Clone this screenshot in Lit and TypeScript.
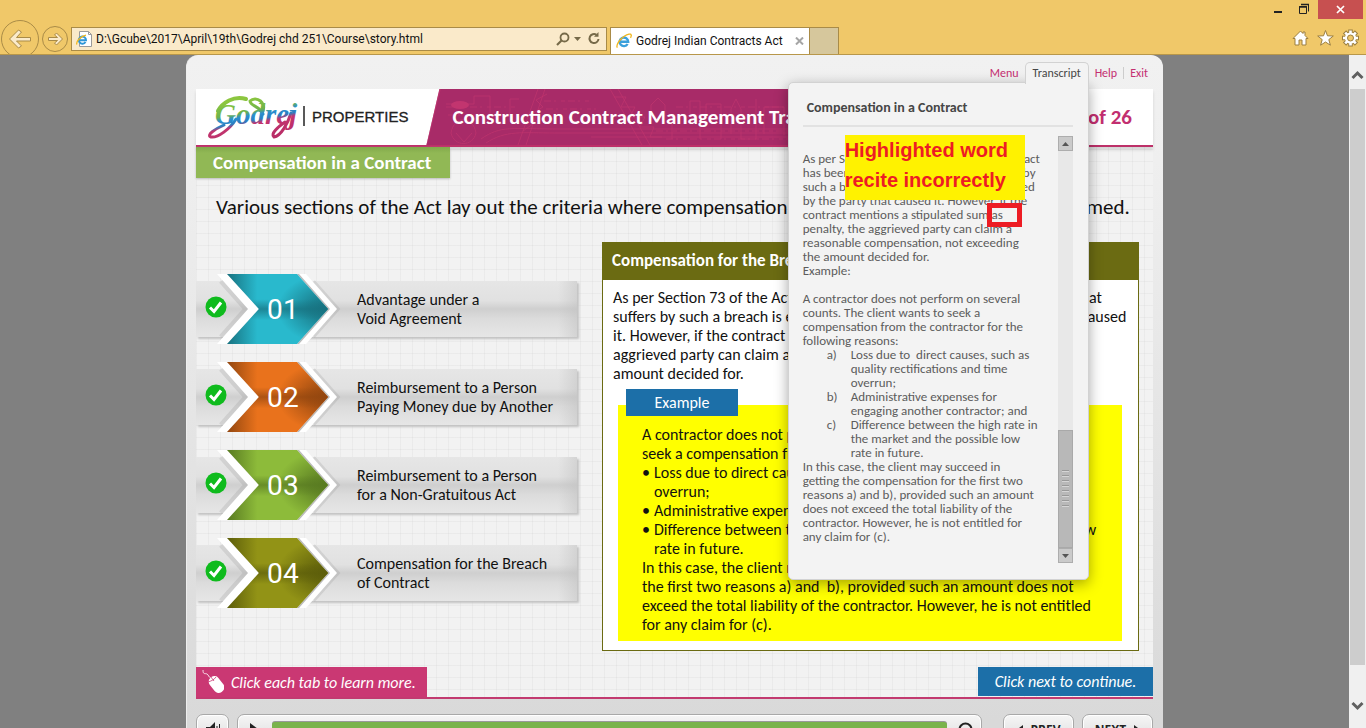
import { LitElement, html, css, svg } from "lit";
import { customElement } from "lit/decorators.js";

const topics = [
  { no: "01", lines: ["Advantage under a", "Void Agreement"], main: "#29b9cd", dark: "#17717f" },
  { no: "02", lines: ["Reimbursement to a Person", "Paying Money due by Another"], main: "#e9721c", dark: "#92460f" },
  { no: "03", lines: ["Reimbursement to a Person", "for a Non-Gratuitous Act"], main: "#8dbb3a", dark: "#587a21" },
  { no: "04", lines: ["Compensation for the Breach", "of Contract"], main: "#929316", dark: "#5c5d0a" },
];

const ieLogo = html`<svg class="ie" viewBox="0 0 16 16" aria-hidden="true">
  <path d="M3.6 8.7h8.6A4.3 4.3 0 1 0 11.6 11" fill="none" stroke="#3aa0dc" stroke-width="2.4" />
  <path d="M1.4 14.6C-.4 12.6 3.4 6.400 8.200 3.200C11.600 1 15 .2 15.200 2.200C15.300 3 15 4 14.500 4.800" fill="none" stroke="#f0b61c" stroke-width="1.300" />
</svg>`;

@customElement("browser-bar")
class BrowserBar extends LitElement {
  static styles = css`
    :host { display: block; flex: none; height: 54px; overflow: hidden; background: #f0c869; border-bottom: 1px solid #b8974a; font-family: Roboto, "Open Sans", sans-serif; font-size: 12px; color: #111; }
    button { border: 0; background: none; padding: 0; display: grid; place-items: center; }
    svg { display: block; }
    .window { display: flex; justify-content: flex-end; height: 20px; padding-right: 3px; gap: 8px; }
    .window button { width: 16px; height: 19px; }
    .window .close { width: 45px; background: #c75050; }
    .bar { display: flex; align-items: flex-start; gap: 3px; padding-left: 1px; }
    .nav { display: flex; gap: 3px; }
    .address { box-sizing: border-box; flex: 0 1 536px; display: flex; align-items: center; height: 24px; margin-top: 7px; padding: 0 4px; gap: 4px; border: 1px solid #a98b47; background: #faeaca; }
    input { flex: 1; min-width: 0; border: 0; padding: 0; background: none; font: inherit; color: inherit; outline: 0; }
    .ie { width: 16px; height: 16px; flex: none; }
    .tabs { display: flex; align-items: stretch; height: 27px; margin-top: 7px; }
    .tab { box-sizing: border-box; width: 200px; display: flex; align-items: center; gap: 4px; padding: 0 5px; background: #fff; border: 1px solid #a98b47; border-bottom: 0; }
    .tab span { flex: 1; white-space: nowrap; }
    .new { width: 29px; background: #d6c79c; border: 1px solid #a98b47; border-left: 0; border-bottom: 0; }
    .tools { display: flex; gap: 8px; margin: 9px 7px 0 auto; }
  `;
  render() {
    return html`
      <div class="window">
        <button aria-label="Minimize"><svg width="16" height="19"><path d="M4 12h8" stroke="#222" stroke-width="2" /></svg></button>
        <button aria-label="Restore"><svg width="16" height="19" fill="none" stroke="#222"><path d="M5.500 6.500h7v7h-7zM7.500 4.500h7v7" /><path d="M5 7h8M7 4.500h8" stroke-width="1.500" /></svg></button>
        <button class="close" aria-label="Close"><svg width="9" height="9"><path d="M1 1l7 7M8 1l-7 7" stroke="#fff" stroke-width="1.700" /></svg></button>
      </div>
      <div class="bar">
        <div class="nav">
          <button aria-label="Back"><svg width="38" height="38" fill="none" stroke="#a98b47"><circle cx="19" cy="19" r="18.500" /><path d="M8.500 19l9-9 3 2-5 5.500h14v3.500h-14l5 5-3 2z" fill="#faeaca" stroke-linejoin="round" /></svg></button>
          <button aria-label="Forward"><svg width="26" height="38" fill="none" stroke="#a98b47"><circle cx="13" cy="19" r="12.500" /><path d="M20.500 19l-6-6-2 2 3 2.500h-9v3h9l-3 2.500 2 2z" fill="#faeaca" stroke-linejoin="round" /></svg></button>
        </div>
        <div class="address">
          <svg class="ie" viewBox="0 0 16 16" aria-hidden="true"><path d="M3.500.5h9l3 3v12h-12z" fill="#fff" stroke="#9a9a9a" /><path d="M12.500.5v3h3" fill="none" stroke="#9a9a9a" /><path d="M3.500 9.300h6.500A3.600 3.600 0 1 0 9.500 11" fill="none" stroke="#2f97d8" stroke-width="2" /><path d="M.8 13.500C0 10.500 4 5.500 10 4.200" fill="none" stroke="#f0b61c" stroke-width="1.300" /></svg>
          <input aria-label="Address" value="D:\\Gcube\\2017\\April\\19th\\Godrej chd 251\\Course\\story.html" />
          <button aria-label="Search"><svg width="14" height="14" fill="none" stroke="#766a49" stroke-width="1.800"><circle cx="8.500" cy="5.500" r="4" /><path d="M5.500 8.500L1 13" stroke-width="2.200" /></svg></button>
          <button aria-label="Show address list"><svg width="8" height="5"><path d="M0 0h7L3.500 4z" fill="#766a49" /></svg></button>
          <button aria-label="Refresh"><svg width="16" height="16" fill="none"><path d="M10.500 3.800a4.500 4.500 0 1 0 2 4.200" stroke="#766a49" stroke-width="2" /><path d="M8 5.800h4.500V1z" fill="#766a49" /></svg></button>
        </div>
        <div class="tabs">
          <div class="tab">${ieLogo}<span>Godrej Indian Contracts Act</span>
            <button aria-label="Close tab"><svg width="9" height="8"><path d="M1 .5l7 7M8 .5l-7 7" stroke="#a5a5a5" stroke-width="2" /></svg></button></div>
          <button class="new" aria-label="New tab"></button>
        </div>
        <div class="tools">
          <button aria-label="Home"><svg width="17" height="18" viewBox="0 0 17 18"><path d="M8.500 2L1 9.500h2V16h4v-5h3v5h4V9.500h2l-3-3V3h-2v1.500z" fill="#fff" stroke="#9b7f40" /></svg></button>
          <button aria-label="Favorites"><svg width="17" height="18" viewBox="0 0 17 18"><path d="M8.500 1.500l2 5.300 5.800.2-4.500 3.600 1.600 5.600-4.900-3.200-4.900 3.200 1.600-5.600L.7 7l5.800-.2z" fill="#fff" stroke="#9b7f40" /></svg></button>
          <button aria-label="Tools"><svg width="17" height="18" viewBox="0 0 17 18"><g transform="translate(8.500 9)"><g fill="#fff" stroke="#9b7f40">${[0, 45, 90, 135].map((a) => svg`<rect x="-1.800" y="-8" width="3.600" height="16" transform="rotate(${a})" />`)}</g><circle r="5.600" fill="#fff" /><circle r="3" fill="#f0c869" stroke="#9b7f40" /></g></svg></button>
        </div>
      </div>`;
  }
}

@customElement("page-scrollbar")
class PageScrollbar extends LitElement {
  static styles = css`
    :host { flex: none; width: 17px; display: flex; flex-direction: column; align-items: center; background: #f0f0f0; }
    button { border: 0; padding: 0; background: none; height: 34px; display: grid; place-items: center; }
    .down { height: 16px; margin: auto 0 14px; }
    .thumb { width: 15px; height: 576px; background: #cdcdcd; }
  `;
  render() {
    return html`
      <button aria-label="Scroll up"><svg width="13" height="15"><path d="M1.500 13l5-5 5 5" fill="none" stroke="#606060" stroke-width="3" /></svg></button>
      <div class="thumb"></div>
      <button class="down" aria-label="Scroll down"><svg width="13" height="10"><path d="M1.500 2l5 5 5-5" fill="none" stroke="#606060" stroke-width="3" /></svg></button>`;
  }
}

@customElement("transcript-panel")
class TranscriptPanel extends LitElement {
  static styles = css`
    :host { position: absolute; z-index: 5; right: 0; top: 20px; box-sizing: border-box; width: 301px; height: 498px; padding: 0 15px 16px 14px; border: 1px solid #d2d2d2; border-radius: 5px 0 5px 5px; background: #f3f3f3; box-shadow: 0 4px 14px rgba(0, 0, 0, .35); color: #5c5c5c; }
    h2 { margin: 0 0 9px; padding: 16px 4px 0; height: 26px; line-height: 18px; border-bottom: 2px solid #e2e2e2; font-size: 14px; color: #464646; }
    .scroll { display: flex; justify-content: space-between; height: 427px; }
    .text { padding-top: 16px; font-size: 13px; line-height: 14px; white-space: nowrap; }
    p { margin: 0; }
    .gap { margin-top: 14px; }
    ol { margin: 0; padding: 0; list-style: none; }
    li { display: grid; grid-template-columns: 24px auto; padding-left: 24px; }
    .bar { flex: none; box-sizing: border-box; width: 15px; display: flex; flex-direction: column; background: #e8e8e8; }
    .bar button { box-sizing: border-box; height: 15px; border: 1px solid #adadad; padding: 0; background: #cacaca; display: grid; place-items: center; }
    .thumb { box-sizing: border-box; margin-top: auto; height: 118px; border: 1px solid #a9a9a9; background: #b8b8b8; display: grid; place-items: center; }
    .grip { width: 7px; height: 38px; background: repeating-linear-gradient(#999 0 1px, #d5d5d5 1px 2px, transparent 2px 5px); }
    .note { position: absolute; left: 56px; top: 52px; width: 180px; height: 65px; background: #fff200; color: #ed1c24; font: bold 20px/30px "Liberation Sans", sans-serif; white-space: nowrap; }
    .mark { position: absolute; left: 198px; top: 120px; box-sizing: border-box; width: 35px; height: 24px; border: 5px solid #ed1c24; }
  `;
  render() {
    return html`
      <h2>Compensation in a Contract</h2>
      <div class="scroll">
        <div class="text">
          <p>As per Section 73 of the Act, when a contract<br />has been breached, the party that suffers by<br />such a breach is entitled to be compensated<br />by the party that caused it. However, if the<br />contract mentions a stipulated sum as<br />penalty, the aggrieved party can claim a<br />reasonable compensation, not exceeding<br />the amount decided for.</p>
          <p>Example:</p>
          <p class="gap">A contractor does not perform on several<br />counts. The client wants to seek a<br />compensation from the contractor for the<br />following reasons:</p>
          <ol>
            <li><span>a)</span><span>Loss due to&nbsp; direct causes, such as<br />quality rectifications and time<br />overrun;</span></li>
            <li><span>b)</span><span>Administrative expenses for<br />engaging another contractor; and</span></li>
            <li><span>c)</span><span>Difference between the high rate in<br />the market and the possible low<br />rate in future.</span></li>
          </ol>
          <p>In this case, the client may succeed in<br />getting the compensation for the first two<br />reasons a) and b), provided such an amount<br />does not exceed the total liability of the<br />contractor. However, he is not entitled for<br />any claim for (c).</p>
        </div>
        <div class="bar">
          <button aria-label="Scroll transcript up"><svg width="7" height="4"><path d="M0 4h7L3.500 0z" fill="#555" /></svg></button>
          <div class="thumb"><div class="grip"></div></div>
          <button aria-label="Scroll transcript down"><svg width="7" height="4"><path d="M0 0h7L3.500 4z" fill="#555" /></svg></button>
        </div>
      </div>
      <div class="note">Highlighted word<br />recite incorrectly</div>
      <div class="mark"></div>`;
  }
}

@customElement("topic-tab")
class TopicTab extends LitElement {
  static properties = { topic: { attribute: false } };
  declare topic: (typeof topics)[number];
  static styles = css`
    :host { display: block; }
    button { position: relative; width: 100%; height: 70px; padding: 0 0 0 9px; border: 0; background: none; display: grid; grid-template-columns: 22px 110px 1fr; align-items: center; font: inherit; color: #111; text-align: left; }
    .strip { position: absolute; inset: 7px 0; background: linear-gradient(90deg, transparent 95%, rgba(190, 190, 190, .45)), linear-gradient(#e6e6e6, #e1e1e1 35%, #cfcfcf 50%, #dcdcdc 68%, #e6e6e6); box-shadow: 2px 2px 2px #c2c2c2; }
    .check, .arrow, .label { position: relative; }
    .check { margin-top: -4px; }
    .arrow { margin-left: -10px; overflow: visible; }
    .label { padding-left: 20px; line-height: 19px; white-space: nowrap; }
    text { font: 28px Roboto, "Liberation Sans", sans-serif; }
  `;
  render() {
    const t = this.topic;
    return html`<button>
      <span class="strip"></span>
      <svg class="check" width="22" height="22"><circle cx="11" cy="11" r="10.500" fill="#0fbb1d" /><path d="M5 11.500l4 4 7-9" fill="none" stroke="#fff" stroke-width="3" /></svg>
      <svg class="arrow" width="122" height="70">
        <defs>
          <linearGradient id="a"><stop offset="0" stop-color="${t.dark}" /><stop offset=".3" stop-color="${t.main}" /><stop offset="1" stop-color="${t.main}" /></linearGradient>
          <radialGradient id="b" cx="1" cy=".5" r=".5"><stop offset="0" stop-color="${t.dark}" /><stop offset=".35" stop-color="${t.dark}" stop-opacity=".75" /><stop offset="1" stop-color="${t.dark}" stop-opacity="0" /></radialGradient>
          <linearGradient id="c" x2="0" y2="1"><stop offset=".36" stop-color="${t.dark}" stop-opacity="0" /><stop offset=".5" stop-color="${t.dark}" stop-opacity=".7" /><stop offset=".66" stop-color="${t.dark}" stop-opacity="0" /></linearGradient>
        </defs>
        <path d="M4 7L29 35L4 63M96 8L120 35L96 62" fill="none" stroke="#888" stroke-opacity=".2" stroke-width="5" />
        <path d="M0 0H10L42 35L10 70H0L31 35z" fill="#fff" />
        <path d="M80 0H89L120 35L89 70H80L111 35z" fill="#fff" />
        <path d="M80 0l31 35-31 35h2l31-35L82 0z" fill="#bbb" />
        <path d="M10 0H80L111 35L80 70H10L42 35z" fill="url(#a)" />
        <path d="M10 0H80L111 35L80 70H10L42 35z" fill="url(#b)" />
        <path d="M10 0H80L111 35L80 70H10L42 35z" fill="url(#c)" />
        <text x="50" y="45" fill="#fff">${t.no[0]}</text><text x="66" y="45" fill="#fff">${t.no[1]}</text>
      </svg>
      <span class="label">${t.lines[0]}<br />${t.lines[1]}</span>
    </button>`;
  }
}

@customElement("app-root")
class AppRoot extends LitElement {
  static styles = css`
    :host { display: flex; flex-direction: column; height: 100vh; overflow: hidden; background: #808080; font-family: Calibri, Carlito, Lato, sans-serif; font-size: 16px; color: #111; }
    a { color: inherit; text-decoration: none; }
    h1, h2, p, ul { margin: 0; padding: 0; }
    svg { display: block; }
    .view { flex: 1; min-height: 0; display: flex; overflow: hidden; }
    .center { flex: 1; min-width: 0; display: flex; justify-content: center; align-items: flex-start; }
    .player { box-sizing: border-box; flex: 0 1 977px; min-width: 0; padding: 0 10px 12px 9px; border-radius: 12px 12px 0 0; background: linear-gradient(#f1f1f1, #efefef 15%, #d9d9d9 95%); border-left: 1px solid #eee; }
    .menu { position: relative; display: flex; justify-content: flex-end; height: 34px; box-sizing: border-box; padding: 7px 5px 0 0; font-size: 12px; line-height: 22px; color: #c42f70; }
    .menu .tab { position: relative; box-sizing: border-box; width: 64px; height: 22px; border: 1px solid #d2d2d2; border-bottom: 0; border-radius: 5px 5px 0 0; background: #f3f3f3; color: #464646; text-align: center; line-height: 20px; z-index: 6; }
    .pop { position: relative; margin: 0 6px; }
    .help { padding-right: 6px; }
    .exit { padding-left: 7px; background: linear-gradient(#ccc, #ccc) 0 5px / 1px 12px no-repeat; }
    .stage { background: repeating-linear-gradient(90deg, rgba(0, 0, 0, .03) 0 1px, transparent 1px 12px), repeating-linear-gradient(rgba(0, 0, 0, .03) 0 1px, transparent 1px 12px), #f2f2f2; border-bottom: 2px solid #c23a70; }
    .head { box-sizing: border-box; display: flex; align-items: center; height: 58px; background: #fff; border-bottom: 2px solid #bd3069; box-shadow: 0 3px 3px rgba(0, 0, 0, .12); }
    .logo { flex: none; }
    .brand { flex: none; font: 15px/20px "Liberation Sans", sans-serif; color: #222; -webkit-text-stroke: 0.3px #222; }
    .banner { position: relative; flex: 1; align-self: stretch; margin-left: 18px; background: #a82b68; clip-path: polygon(13px 0, 100% 0, 100% 100%, 0 100%); display: flex; align-items: center; }
    .banner svg { position: absolute; inset: 0; width: 100%; height: 100%; }
    h1 { position: relative; padding-left: 26px; font-size: 21px; line-height: 24px; color: #fff; white-space: nowrap; }
    .page { flex: none; width: 120px; padding-right: 21px; text-align: right; font-weight: bold; font-size: 21px; color: #c22f70; }
    .topic { width: 237px; padding-left: 17px; background: linear-gradient(#82a94b, #91b855 6px); box-shadow: 0 1px 2px #bbb; color: #fff; font-size: 19px; line-height: 31px; }
    .intro { padding: 15px 0 0 20px; font-size: 21px; line-height: 28px; white-space: nowrap; }
    .body { display: flex; justify-content: space-between; padding: 21px 14px 16px 0; }
    .topics { flex: 0 0 381px; display: flex; flex-direction: column; gap: 18px; padding-top: 32px; }
    .panel { box-sizing: border-box; flex: 0 1 537px; border: 1px solid #6b6b12; border-top: 0; background: #fff; line-height: 19px; white-space: nowrap; }
    .panel h2 { padding-left: 9px; background: #6b6b12; color: #fff; font-size: 17px; line-height: 38px; }
    .law { padding: 8px 10px 6px; }
    .case { margin: 0 16px 9px 15px; padding: 0 24px 7px; background: linear-gradient(#fff 16px, #ff0 16px); }
    .case h3 { margin: 0 0 9px -16px; width: 112px; background: #1c6fa8; color: #fff; font-size: 16px; font-weight: normal; line-height: 27px; text-align: center; }
    li { list-style: none; display: grid; grid-template-columns: 12px auto; }
    .foot { display: flex; justify-content: space-between; height: 30px; font-size: 16px; font-style: italic; line-height: 29px; color: #fff; white-space: nowrap; }
    .hint { display: flex; align-items: center; gap: 7px; width: 225px; padding-left: 6px; background: #ca3873; }
    .next { box-sizing: border-box; width: 175px; height: 29px; background: #1c6fa8; text-align: center; }
    .controls { display: flex; gap: 8px; padding-top: 15px; }
    .controls button, .seek { box-sizing: border-box; height: 30px; border: 1px solid #a9a9a9; border-radius: 7px; background: linear-gradient(#f6f6f6, #dcdcdc); box-shadow: inset 0 0 0 1px #fff; }
    .controls button { padding: 0; display: flex; align-items: center; justify-content: center; gap: 8px; font: bold 12px "Open Sans", sans-serif; color: #222; }
    .controls .vol { width: 33px; }
    .seek { flex: 1; display: flex; align-items: center; gap: 10px; padding: 0 8px 0 12px; margin-right: 13px; }
    .seek .play, .seek .again { border: 0; background: none; box-shadow: none; height: 20px; }
    .track { flex: 1; height: 14px; margin: 0 1px 0 4px; border-radius: 3px; background: #7ab34b; box-shadow: 0 -1px #999; }
    .controls .step { width: 71px; }
  `;
  render() {
    return html`
      <browser-bar></browser-bar>
      <div class="view">
        <div class="center">
          <main class="player">
            <nav class="menu">
              <a href="#">Menu</a>
              <div class="pop"><a href="#"><div class="tab">Transcript</div></a><transcript-panel></transcript-panel></div>
              <a class="help" href="#">Help</a>
              <a class="exit" href="#">Exit</a>
            </nav>
            <section class="stage">
              <header class="head">
                <svg class="logo" width="116" height="56" aria-label="Godrej">
                  <defs><linearGradient id="g" gradientUnits="userSpaceOnUse" x1="60" y1="8" x2="68" y2="50"><stop offset="0" stop-color="#8cc63f" /><stop offset=".3" stop-color="#6db24c" /><stop offset=".4" stop-color="#2b8fcf" /><stop offset=".52" stop-color="#2b7ec0" /><stop offset=".6" stop-color="#c2356f" /><stop offset="1" stop-color="#b82c66" /></linearGradient></defs>
                  <g fill="none" stroke="url(#g)" stroke-linecap="round">
                    <path d="M50 10C38 6 26 14 22 22" stroke-width="4" />
                    <path d="M40 30C34 40 22 49 15 48C10 46 19 40 28 36" stroke-width="3" />
                    <path d="M66 24C72 14 60 6 54 12C54 17 64 17 67 25" stroke-width="3" />
                    <path d="M95 24C92 34 85 47 78 48C74 45 82 38 89 33" stroke-width="3" />
                  </g>
                  <text x="19" y="35" font-family="Liberation Serif, serif" font-size="29" font-weight="bold" font-style="italic" fill="url(#g)">Godrej</text>
                  <path d="M108 17v20" stroke="#222" stroke-width="1.500" />
                </svg>
                <span class="brand">PROPERTIES</span>
                <div class="banner">
                  <svg aria-hidden="true"><g fill="none" stroke="#c2356f" stroke-opacity=".65">
                    <path d="M0 56l14-57" stroke-width="2" />
                    <path d="M92 56L112 0m-12 56l19-56M97 42l14-10-7-6 13-8-7-7 11-6M184 0l32 56m-24-56l32 56M188 8h12l-5 10h14l-5 10h15l-5 10h14l-4 10h12" />
                    <path d="M55 50c20-14 30-10 80-10h290M60 54c20-13 35-10 70-10h300M165 48h260M25 44c3-18 22-18 25 0-3 14-22 14-25 0zM30 44l8 9 8-9" />
                    <path d="M20 15h28v-8h16v20h20v-17h9M225 35V16l7-7 7 7v19M246 50V28h18V12h10v38M280 35V15h15v35M305 45V20l5-10 5 10v30h15V10m8 35V18h20v28" />
                    <path d="M20 18h70M22 26h60M118 12h48M120 20h50M250 18h170M246 26h180M230 42h210M240 50h200" stroke-dasharray="7 3 2 5 4 3" />
                  </g><ellipse cx="34" cy="16" rx="9" ry="4" fill="#c2356f" /></svg>
                  <h1>Construction Contract Management Training</h1>
                </div>
                <div class="page">Page 20 of 26</div>
              </header>
              <h2 class="topic">Compensation in a Contract</h2>
              <p class="intro">Various sections of the Act lay out the criteria where compensation for a breach of contract can be claimed.</p>
              <div class="body">
                <div class="topics">${topics.map((t) => html`<topic-tab .topic=${t}></topic-tab>`)}</div>
                <article class="panel">
                  <h2>Compensation for the Breach of Contract</h2>
                  <p class="law">As per Section 73 of the Act, if a contract has been breached, the party that<br />suffers by such a breach is entitled to be compensated by the party that caused<br />it. However, if the contract mentions a stipulated sum as penalty, the<br />aggrieved party can claim a reasonable compensation, not exceeding the<br />amount decided for.</p>
                  <div class="case">
                    <h3>Example</h3>
                    <p>A contractor does not perform on several counts. The client wants to<br />seek a compensation from the contractor for the following reasons:</p>
                    <ul>
                      <li><span>•</span><span>Loss due to direct causes, such as quality rectifications and time<br />overrun;</span></li>
                      <li><span>•</span><span>Administrative expenses for engaging another contractor; and</span></li>
                      <li><span>•</span><span>Difference between the high rate in the market and the possible low<br />rate in future.</span></li>
                    </ul>
                    <p>In this case, the client may succeed in getting compensation for<br />the first two reasons a) and&nbsp; b), provided such an amount does not<br />exceed the total liability of the contractor. However, he is not entitled<br />for any claim for (c).</p>
                  </div>
                </article>
              </div>
              <footer class="foot">
                <div class="hint"><svg width="22" height="26" aria-hidden="true"><path d="M1 1c0 5 2 3 4 4s1 3 4 4" fill="none" stroke="#fff" stroke-opacity=".8" /><rect x="-5" y="-8" width="11" height="18" rx="5" transform="translate(13.500 15) rotate(-38)" fill="#fff" /><path d="M6 13c3-1 6-2 8-5M8.500 7.500l3.500 4.500" fill="none" stroke="#ca3873" stroke-width=".8" /></svg>Click each tab to learn more.</div>
                <div class="next">Click next to continue.</div>
              </footer>
            </section>
            <div class="controls">
              <button class="vol" aria-label="Volume"><svg width="14" height="14"><path d="M0 5h4l5-5v14l-5-5H0z" fill="#222" /><path d="M11 4v6M13.500 2v10" stroke="#222" /></svg></button>
              <div class="seek"><button class="play" aria-label="Play"><svg width="8" height="12"><path d="M0 0v12l8-6z" fill="#222" /></svg></button><div class="track"></div>
                <button class="again" aria-label="Replay"><svg width="15" height="15"><circle cx="7.500" cy="7.500" r="6" fill="none" stroke="#222" stroke-width="2" /></svg></button></div>
              <button class="step"><svg width="6" height="9"><path d="M6 0v9L0 4.500z" fill="#222" /></svg>PREV</button>
              <button class="step">NEXT<svg width="6" height="9"><path d="M0 0v9l6-4.500z" fill="#222" /></svg></button>
            </div>
          </main>
        </div>
        <page-scrollbar></page-scrollbar>
      </div>`;
  }
}
